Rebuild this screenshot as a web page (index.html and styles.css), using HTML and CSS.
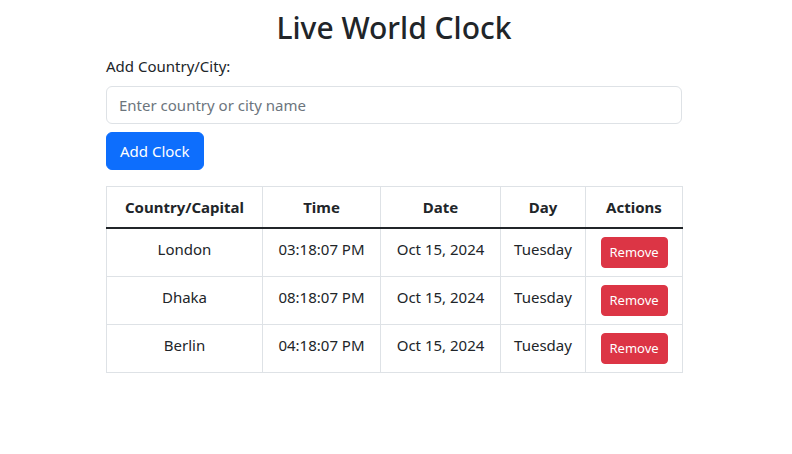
FILE: index.html
```html
<!DOCTYPE html>
<html lang="en">
<head>
<meta charset="utf-8">
<title>Live World Clock</title>
<link rel="stylesheet" href="styles.css">
</head>
<body>
<div class="container">
  <h1 class="title">Live World Clock</h1>
  <label class="form-label" for="city">Add Country/City:</label>
  <input class="form-control" id="city" type="text" placeholder="Enter country or city name">
  <button class="btn btn-primary">Add Clock</button>
  <table class="table">
    <colgroup>
      <col style="width:156px">
      <col style="width:118px">
      <col style="width:120px">
      <col style="width:85px">
      <col style="width:97px">
    </colgroup>
    <thead>
      <tr><th>Country/Capital</th><th>Time</th><th>Date</th><th>Day</th><th>Actions</th></tr>
    </thead>
    <tbody>
      <tr><td>London</td><td>03:18:07 PM</td><td>Oct 15, 2024</td><td>Tuesday</td><td><button class="btn btn-danger btn-sm">Remove</button></td></tr>
      <tr><td>Dhaka</td><td>08:18:07 PM</td><td>Oct 15, 2024</td><td>Tuesday</td><td><button class="btn btn-danger btn-sm">Remove</button></td></tr>
      <tr><td>Berlin</td><td>04:18:07 PM</td><td>Oct 15, 2024</td><td>Tuesday</td><td><button class="btn btn-danger btn-sm">Remove</button></td></tr>
    </tbody>
  </table>
</div>
</body>
</html>
```
FILE: styles.css
```css
* { box-sizing: border-box; }
html, body { margin: 0; background: #fff; }
body {
  font-family: "Noto Sans", "Open Sans", sans-serif;
  font-size: 15px;
  line-height: 24px;
  color: #212529;
  padding-right: 4px;
}
.container {
  width: 576px;
  margin: 0 auto;
  display: flex;
  flex-direction: column;
  align-items: flex-start;
}
.title {
  align-self: stretch;
  text-align: center;
  font-size: 30px;
  font-weight: 500;
  line-height: 38px;
  margin: 9px 0 7px;
}
.form-label { display: block; margin-bottom: 8px; }
.form-control {
  display: block;
  width: 100%;
  height: 38px;
  padding: 6px 12px;
  font: inherit;
  color: #212529;
  border: 1px solid #dee2e6;
  border-radius: 6px;
  margin: 0 0 8px;
  background: #fff;
}
.form-control::placeholder { color: #6c757d; opacity: 1; }
.btn {
  font: inherit;
  border: 1px solid transparent;
  color: #fff;
  cursor: pointer;
}
.btn-primary {
  background: #0d6efd;
  border-color: #0d6efd;
  height: 38px;
  padding: 6px 13px;
  border-radius: 6px;
}
.btn-danger {
  background: #dc3545;
  border-color: #dc3545;
}
.btn-sm {
  font-size: 13px;
  line-height: 21px;
  padding: 4px 8px;
  border-radius: 4px;
  height: 31px;
  width: 67px;
}
.table {
  margin-top: 16px;
  width: 576px;
  border-collapse: collapse;
  table-layout: fixed;
}
.table th, .table td {
  border: 1px solid #dee2e6;
  padding: 8px;
  text-align: center;
  vertical-align: top;
}
.table th { font-weight: 700; }
.table thead th { border-bottom: 2px solid #212529; }
```
